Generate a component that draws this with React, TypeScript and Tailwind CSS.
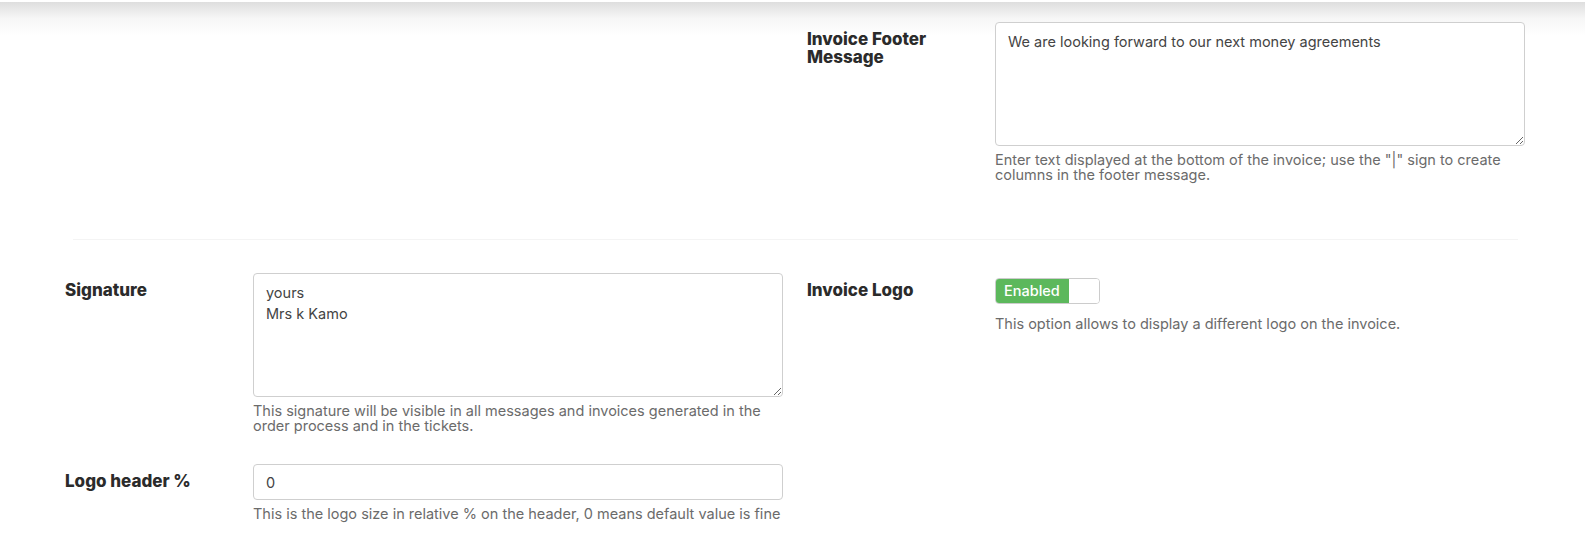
import React from 'react';

const font = "font-['Inter','Liberation_Sans',sans-serif]";

function Label({ children }: { children: React.ReactNode }) {
  return (
    <div className="pt-[8px] pr-4 text-[17px] leading-[18px] font-extrabold text-[#2b2b2b]">
      {children}
    </div>
  );
}

function Help({ children }: { children: React.ReactNode }) {
  return <p className="mt-[6px] text-[14.5px] leading-[15px] text-[#6b6b6b]">{children}</p>;
}

function Field({ label, children }: { label: React.ReactNode; children: React.ReactNode }) {
  return (
    <div className="grid grid-cols-[188px_530px]">
      <Label>{label}</Label>
      <div>{children}</div>
    </div>
  );
}

const textareaCls =
  'block w-full h-[124px] rounded-[4px] border border-[#cfcfcf] px-3 py-2 text-[14.5px] leading-[21px] text-[#444] bg-white outline-none';

export default function App() {
  return (
    <div className={`relative min-h-screen bg-white ${font}`}>
      {/* header shadow */}
      <div className="pointer-events-none absolute inset-x-0 top-[2px] h-[34px] bg-gradient-to-b from-[#dedede] via-[#f7f7f7] to-white" />

      <div className="relative pl-[65px] pt-[22px]">
        {/* first row: footer message */}
        <div className="grid grid-cols-[718px_718px] gap-x-6">
          <div />
          <Field
            label={
              <>
                Invoice Footer
                <br />
                Message
              </>
            }
          >
            <textarea
              className={textareaCls}
              defaultValue="We are looking forward to our next money agreements"
            />
            <Help>
              Enter text displayed at the bottom of the invoice; use the "|" sign to create
              columns in the footer message.
            </Help>
          </Field>
        </div>

        <div className="mt-[57px] ml-2 w-[1445px] border-t border-[#f4f4f4]" />

        {/* second row: signature, logo */}
        <div className="mt-[33px] grid grid-cols-[718px_718px] gap-x-6">
          <div className="flex flex-col gap-[31px]">
            <Field label="Signature">
              <textarea className={textareaCls} defaultValue={'yours\nMrs k Kamo'} />
              <Help>
                This signature will be visible in all messages and invoices generated in the
                order process and in the tickets.
              </Help>
            </Field>
            <Field label="Logo header %">
              <input
                className="block w-full h-9 rounded-[4px] border border-[#cfcfcf] px-3 text-[14.5px] text-[#444] outline-none"
                defaultValue="0"
              />
              <Help>This is the logo size in relative % on the header, 0 means default value is fine</Help>
            </Field>
          </div>

          <Field label="Invoice Logo">
            <div className="mt-[5px] flex h-[26px] w-[105px] overflow-hidden rounded-[4px] border border-[#cccccc]">
              <span className="flex w-[73px] items-center bg-[#5cb85c] pl-2 text-[14.5px] font-medium text-white">
                Enabled
              </span>
              <span className="flex-1 bg-white" />
            </div>
            <p className="mt-[12px] text-[14.5px] leading-[15px] text-[#6b6b6b]">
              This option allows to display a different logo on the invoice.
            </p>
          </Field>
        </div>
      </div>
    </div>
  );
}
